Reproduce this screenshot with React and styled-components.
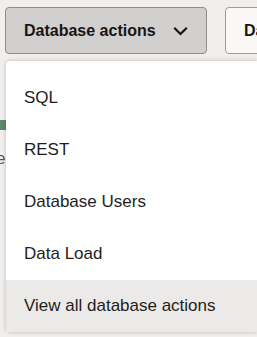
import React from "react";
import styled, { createGlobalStyle } from "styled-components";

const Global = createGlobalStyle`
  html, body { margin: 0; padding: 0; background: #f1efed; }
  body { font-family: "Liberation Sans", Arial, sans-serif; color: #161513; overflow: hidden; }
`;

const Page = styled.div`
  position: relative;
  width: 257px;
  height: 337px;
  overflow: hidden;
`;

const Toolbar = styled.div`
  display: flex;
  gap: 18px;
  padding: 7px 0 0 5px;
`;

const Button = styled.button`
  flex: none;
  display: flex;
  align-items: center;
  gap: 17px;
  height: 47px;
  padding: 0 16px 0 18px;
  border: 1px solid ${(p) => (p.$active ? "#8f8d8a" : "#9e9b98")};
  border-radius: 4px;
  background: ${(p) => (p.$active ? "#d1d0ce" : "#f9f8f7")};
  font-family: inherit;
  font-size: 16px;
  font-weight: 700;
  color: #161513;
  white-space: nowrap;
  width: ${(p) => p.$width}px;
`;

const Content = styled.div`
  padding-top: 66px;
  display: flex;
  flex-direction: column;
  gap: 20px;
`;

const Bar = styled.div`
  width: 80px;
  height: 10px;
  background: #5c8a67;
`;

const Label = styled.div`
  margin-left: -8px;
  font-size: 16px;
  color: #555;
`;

const Menu = styled.ul`
  position: absolute;
  top: 61px;
  left: 6px;
  width: 251px;
  margin: 0;
  padding: 11px 0 0;
  list-style: none;
  background: #ffffff;
  border-radius: 4px 0 0 4px;
  box-shadow: 0 0 4px rgba(0, 0, 0, 0.22);
`;

const Item = styled.li`
  height: 52px;
  display: flex;
  align-items: center;
  padding-left: 18px;
  font-size: 17px;
  color: #1f1e1c;
  background: ${(p) => (p.$hover ? "#ebeae9" : "transparent")};
`;

const Chevron = () => (
  <svg width="15" height="10" viewBox="0 0 15 10" fill="none">
    <path d="M1.2 1.8l6.3 6.2 6.3-6.2" stroke="#161513" strokeWidth="2.2" />
  </svg>
);

const items = ["SQL", "REST", "Database Users", "Data Load", "View all database actions"];

export default function App() {
  return (
    <Page>
      <Global />
      <Toolbar>
        <Button $active $width={202}>
          Database actions
          <Chevron />
        </Button>
        <Button $width={120}>Data</Button>
      </Toolbar>
      <Content>
        <Bar />
        <Label>te</Label>
      </Content>
      <Menu>
        {items.map((t, i) => (
          <Item key={t} $hover={i === items.length - 1}>
            {t}
          </Item>
        ))}
      </Menu>
    </Page>
  );
}
